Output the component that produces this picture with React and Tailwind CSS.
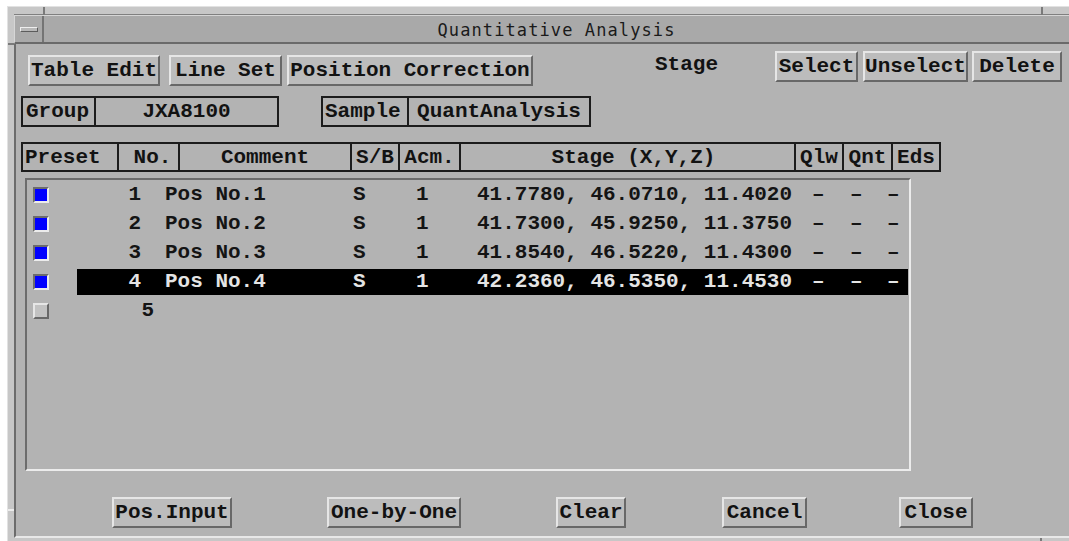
import React from "react";

const raised =
  "border-2 border-t-[#e6e6e6] border-l-[#e6e6e6] border-b-[#686868] border-r-[#686868] bg-[#bcbcbc]";
const sunken =
  "border-2 border-t-[#6c6c6c] border-l-[#6c6c6c] border-b-[#ececec] border-r-[#ececec]";
const courier = "font-['Courier_New','Liberation_Mono',monospace] font-bold text-[21px] leading-none";

function Btn({ className = "", children }) {
  return (
    <div className={`flex items-center justify-center h-[31px] ${raised} ${courier} text-[#121212] ${className}`}>
      {children}
    </div>
  );
}

function Check({ on }) {
  return on ? (
    <div className={`w-[16px] h-[16px] ${sunken} bg-[#0000ff]`} />
  ) : (
    <div className={`w-[16px] h-[16px] ${raised} bg-[#c2c2c2]`} />
  );
}

const rows = [
  { n: "1", c: "Pos No.1", s: "S", a: "1", xyz: "41.7780, 46.0710, 11.4020" },
  { n: "2", c: "Pos No.2", s: "S", a: "1", xyz: "41.7300, 45.9250, 11.3750" },
  { n: "3", c: "Pos No.3", s: "S", a: "1", xyz: "41.8540, 46.5220, 11.4300" },
  { n: "4", c: "Pos No.4", s: "S", a: "1", xyz: "42.2360, 46.5350, 11.4530", sel: true },
];

function Row({ r }) {
  return (
    <div className="flex items-center h-[29px]">
      <div className="ml-[6px]">
        <Check on />
      </div>
      <div
        className={`ml-[28px] flex items-center h-[26px] w-[831px] ${courier} whitespace-pre ${
          r.sel ? "bg-black text-[#e4e4e4]" : "text-[#141414]"
        }`}
      >
        <span className="w-[64px] text-right">{r.n}</span>
        <span className="w-[211px] pl-[24px]">{r.c}</span>
        <span className="w-[64px] pl-[1px]">{r.s}</span>
        <span className="w-[61px]">{r.a}</span>
        <span className="w-[334px]">{r.xyz}</span>
        <span className="w-[39px] pl-[1px]">–</span>
        <span className="w-[37px]">–</span>
        <span className="w-[21px]">–</span>
      </div>
    </div>
  );
}

export default function App() {
  return (
    <div className="relative w-[1069px] h-[541px] overflow-hidden bg-white pt-[6px] pl-[7px]">
      {/* window frame */}
      <div className="relative w-[1062px] h-[535px] flex flex-col bg-[#c7c7c7] border-t border-l border-[#e2e2e2] pl-[6px] pt-[8px] pb-[3px]">
        {/* resize corner ticks */}
        <span className="absolute left-[35px] top-0 w-[2px] h-[8px] bg-[#7a7a7a]" />
        <span className="absolute right-[26px] top-0 w-[2px] h-[8px] bg-[#7a7a7a]" />
        <span className="absolute left-0 top-[36px] w-[6px] h-[2px] bg-[#7a7a7a]" />
        <span className="absolute left-0 top-[502px] w-[6px] h-[2px] bg-[#ececec]" />

        {/* title bar */}
        <div className="flex h-[29px] bg-[#a9a9a9] border-t border-l border-[#d6d6d6] border-b-2 border-b-[#6a6a6a] shadow-[0_-1px_0_#808080]">
          <div className="w-[29px] flex items-center justify-center border-r-2 border-r-[#747474]">
            <div className="w-[18px] h-[5px] border border-t-[#eeeeee] border-l-[#eeeeee] border-b-[#5c5c5c] border-r-[#5c5c5c] bg-[#b8b8b8]" />
          </div>
          <div className="flex-1 flex items-center justify-center pt-[2px] font-['DejaVu_Sans_Mono',monospace] text-[17px] tracking-[1.1px] text-[#1a1a1a] leading-none">
            Quantitative Analysis
          </div>
        </div>

        {/* dialog body */}
        <div className="flex-1 flex flex-col bg-[#b3b3b3] border-l-2 border-l-[#6c6c6c] border-b-2 border-b-[#e8e8e8]">
          {/* toolbar */}
          <div className="flex items-start h-[42px]">
            <div className="flex ml-[12px] mt-[11px]">
              <Btn className="w-[132px]">Table Edit</Btn>
              <Btn className="w-[113px] ml-[9px]">Line Set</Btn>
              <Btn className="w-[246px] ml-[5px]">Position Correction</Btn>
            </div>
            <div className={`ml-[122px] mt-[10px] w-[120px] ${courier} text-[#121212]`}>Stage</div>
            <div className="flex mt-[7px]">
              <Btn className="w-[83px]">Select</Btn>
              <Btn className="w-[105px] ml-[5px]">Unselect</Btn>
              <Btn className="w-[90px] ml-[4px]">Delete</Btn>
            </div>
          </div>

          {/* group / sample */}
          <div className={`flex mt-[10px] ml-[5px] h-[31px] ${courier} text-[#121212]`}>
            <div className="flex w-[258px] border-2 border-[#1c1c1c]">
              <div className="w-[73px] border-r-2 border-[#1c1c1c] flex items-center pl-[3px]">Group</div>
              <div className="flex-1 flex items-center justify-center">JXA8100</div>
            </div>
            <div className="flex w-[270px] ml-[42px] border-2 border-[#1c1c1c]">
              <div className="w-[86px] border-r-2 border-[#1c1c1c] flex items-center pl-[2px]">Sample</div>
              <div className="flex-1 flex items-center justify-center">QuantAnalysis</div>
            </div>
          </div>

          {/* column headers */}
          <div className={`flex mt-[15px] ml-[5px] w-[920px] h-[30px] border-2 border-[#1c1c1c] ${courier} text-[#121212]`}>
            <div className="w-[96px] border-r-2 border-[#1c1c1c] flex items-center pl-[2px]">Preset</div>
            <div className="w-[61px] border-r-2 border-[#1c1c1c] flex items-center justify-center pl-[8px]">No.</div>
            <div className="w-[172px] border-r-2 border-[#1c1c1c] flex items-center justify-center">Comment</div>
            <div className="w-[48px] border-r-2 border-[#1c1c1c] flex items-center justify-center">S/B</div>
            <div className="w-[61px] border-r-2 border-[#1c1c1c] flex items-center justify-center">Acm.</div>
            <div className="w-[335px] border-r-2 border-[#1c1c1c] flex items-center justify-center pl-[12px]">Stage (X,Y,Z)</div>
            <div className="w-[48px] border-r-2 border-[#1c1c1c] flex items-center justify-center">Qlw</div>
            <div className="w-[49px] border-r-2 border-[#1c1c1c] flex items-center justify-center">Qnt</div>
            <div className="w-[46px] flex items-center justify-center">Eds</div>
          </div>

          {/* position list */}
          <div className={`mt-[6px] ml-[9px] w-[886px] h-[293px] ${sunken} flex flex-col`}>
            {rows.map((r) => (
              <Row key={r.n} r={r} />
            ))}
            <div className="flex items-center h-[29px]">
              <div className="ml-[6px]">
                <Check on={false} />
              </div>
              <div className={`ml-[28px] w-[77px] text-right ${courier} text-[#141414]`}>5</div>
            </div>
          </div>

          {/* bottom actions */}
          <div className="flex mt-[26px] ml-[96px]">
            <Btn className="w-[120px] h-[30px]">Pos.Input</Btn>
            <Btn className="w-[134px] h-[30px] ml-[95px]">One-by-One</Btn>
            <Btn className="w-[70px] h-[30px] ml-[95px]">Clear</Btn>
            <Btn className="w-[85px] h-[30px] ml-[96px]">Cancel</Btn>
            <Btn className="w-[74px] h-[30px] ml-[92px]">Close</Btn>
          </div>
        </div>
        <span className="absolute right-[27px] bottom-0 w-[2px] h-[3px] bg-[#7a7a7a]" />
      </div>
    </div>
  );
}
